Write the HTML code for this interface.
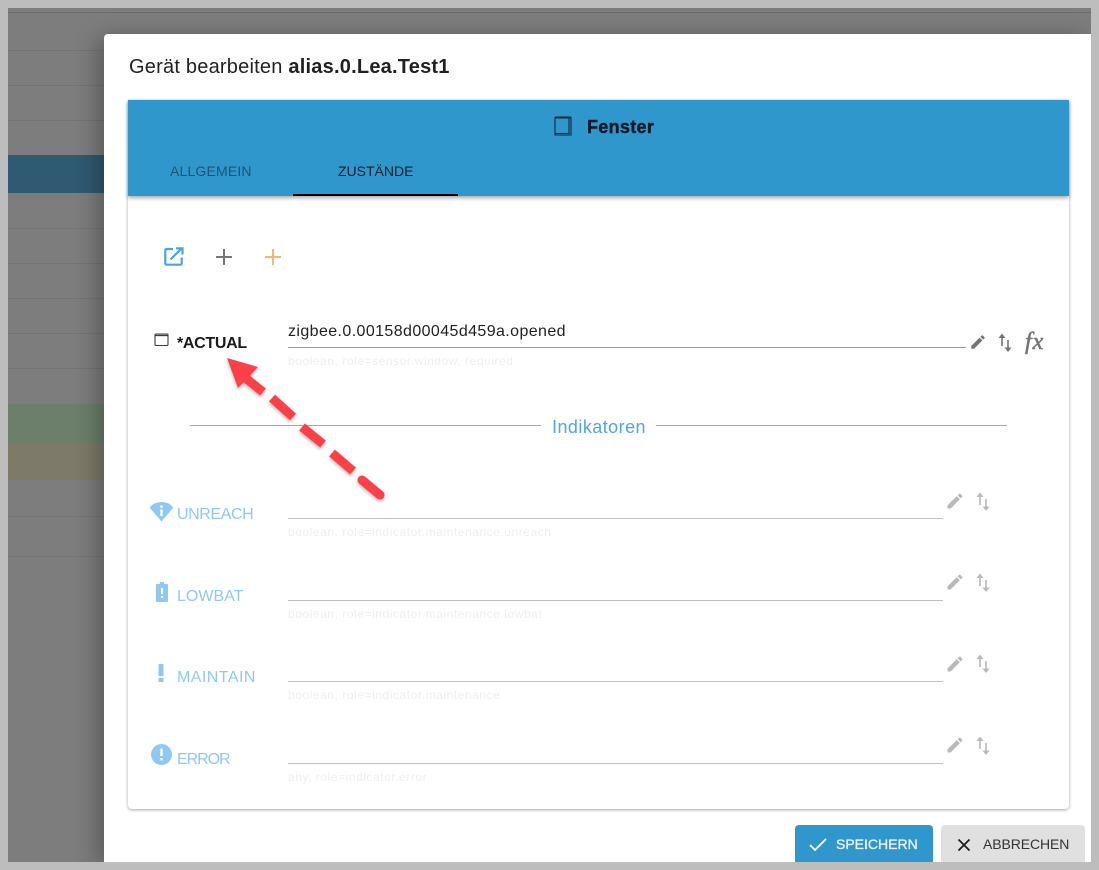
<!DOCTYPE html>
<html><head><meta charset="utf-8"><style>
html,body{margin:0;padding:0}
body{width:1099px;height:870px;overflow:hidden;position:relative;background:#7d7d7d;font-family:"Liberation Sans",sans-serif}
.a{position:absolute;white-space:nowrap}
.l{position:absolute;left:8px;width:96px;height:1px;background:#737373}
.lab{position:absolute;left:177px;font-size:16px;color:#90c8f4;line-height:18px;white-space:nowrap}
.ul{position:absolute;left:288px;width:655px;height:1px;background:#c0c0c0}
.hint{position:absolute;left:288px;font-size:12px;line-height:14px;color:#eeeeee;white-space:nowrap;letter-spacing:.55px}
svg{position:absolute;overflow:visible}
</style></head><body>
<div class="a" style="left:8px;top:155px;width:96px;height:38px;background:#2f5a72"></div>
<div class="a" style="left:8px;top:404px;width:96px;height:39px;background:#6b7f6b"></div>
<div class="a" style="left:8px;top:443px;width:96px;height:37px;background:#7e7a69"></div>
<div class="a" style="left:8px;top:12px;width:1083px;height:1px;background:#6c6c6c"></div>
<div class="l" style="top:50px"></div><div class="l" style="top:85px"></div><div class="l" style="top:120px"></div>
<div class="l" style="top:228px"></div><div class="l" style="top:263px"></div><div class="l" style="top:298px"></div><div class="l" style="top:333px"></div><div class="l" style="top:368px"></div>
<div class="l" style="top:516px"></div><div class="l" style="top:556px"></div>

<div class="a" style="left:104px;top:34px;width:987px;height:828px;background:#fff;border-radius:4px 0 0 0;box-shadow:-6px 4px 24px rgba(0,0,0,.3)"></div>
<div class="a" style="left:129px;top:55px;font-size:20px;line-height:24px;color:#212121;letter-spacing:.22px">Gerät bearbeiten <b>alias.0.Lea.Test1</b></div>

<div class="a" style="left:128px;top:100px;width:941px;height:709px;background:#fff;border-radius:0 0 4px 4px;box-shadow:0 1px 3px rgba(0,0,0,.35)"></div>
<div class="a" style="left:128px;top:100px;width:941px;height:96px;background:#3097cd;box-shadow:0 2px 4px rgba(0,0,0,.35)"></div>
<svg style="left:554px;top:116px" width="20" height="20" viewBox="0 0 20 20" fill="none" stroke="#0d2a40" stroke-width="1.100"><path d="M1 1.500H17V19H1Z"/><path d="M15 1.500V17.500H1"/><path d="M1 1.500H17" stroke-width="2"/></svg>
<div class="a" style="left:587px;top:116px;font-size:18px;line-height:22px;font-weight:bold;color:#0b1a26;letter-spacing:.3px;-webkit-text-stroke:.4px #0b1a26">Fenster</div>
<div class="a" style="left:170px;top:163px;font-size:14px;line-height:17px;letter-spacing:.17px;color:#1c5476">ALLGEMEIN</div>
<div class="a" style="left:338px;top:163px;font-size:14px;line-height:17px;letter-spacing:0;color:#10212c">ZUSTÄNDE</div>
<div class="a" style="left:293px;top:194px;width:165px;height:2px;background:#000"></div>

<svg style="left:162px;top:245px" width="24" height="24" viewBox="0 0 24 24" fill="none" stroke="#4aa3e6" stroke-width="2.200"><path d="M11 4H4.500A1.200 1.200 0 0 0 3.300 5.200V18.500A1.200 1.200 0 0 0 4.500 19.700H18.500A1.200 1.200 0 0 0 19.700 18.500V12.500"/><path d="M8.500 14.500L19.500 3.500M14 3.300H20.500V9.500"/></svg>
<svg style="left:212px;top:245px" width="24" height="24" viewBox="0 0 24 24" fill="none" stroke="#777" stroke-width="2"><path d="M12 4V20M4 12H20"/></svg>
<svg style="left:261px;top:245px" width="24" height="24" viewBox="0 0 24 24" fill="none" stroke="#f2b77c" stroke-width="2"><path d="M12 4V20M4 12H20"/></svg>

<svg style="left:154px;top:333px" width="15" height="14" viewBox="0 0 15 14" fill="none" stroke="#3b3b3b" stroke-width="1.100"><rect x="1" y="1" width="13" height="11.500" rx="1"/><path d="M1 2.500H14" stroke-width="1.300"/></svg>
<div class="a" style="left:177px;top:335px;font-size:16px;line-height:18px;font-weight:bold;color:#1a1a1a;letter-spacing:-.3px">*ACTUAL</div>
<div class="a" style="left:288px;top:322px;font-size:16px;line-height:19px;color:#222;letter-spacing:.4px">zigbee.0.00158d00045d459a.opened</div>
<div class="a" style="left:288px;top:347px;width:678px;height:1px;background:#999"></div>
<div class="hint" style="top:354px">boolean, role=sensor.window, required</div>

<svg style="left:969px;top:333px" width="18" height="18" viewBox="0 0 24 24" fill="#757575"><path d="M3 17.250V21h3.750L17.810 9.940l-3.750-3.750L3 17.250zM20.710 7.040a1 1 0 0 0 0-1.410l-2.340-2.340a1 1 0 0 0-1.410 0l-1.830 1.830 3.750 3.750 1.830-1.830z"/></svg>
<svg style="left:997px;top:333px" width="18" height="20" viewBox="0 0 18 20" fill="#757575"><path d="M4.200 4H5.800V13H4.200ZM1.500 5L5 .5L8.500 5ZM10.200 7H11.800V15H10.200ZM7.500 14.500H14.500L11 19Z"/></svg>
<div class="a" style="left:1025px;top:330px;font-family:'Liberation Serif',serif;font-style:italic;font-size:24px;line-height:24px;color:#757575;letter-spacing:1px;-webkit-text-stroke:.6px #757575">fx</div>

<div class="a" style="left:190px;top:425px;width:351px;height:1px;background:#6cbbe3"></div>
<div class="a" style="left:656px;top:425px;width:351px;height:1px;background:#6cbbe3"></div>
<div class="a" style="left:552px;top:416px;font-size:18px;line-height:22px;color:#4ea6e4;letter-spacing:.45px">Indikatoren</div>

<svg style="left:149px;top:501px" width="25" height="21" viewBox="0 0 25 21"><path d="M12.500 20.500L0.500 6.500Q5 1 12.500 1Q20 1 24.500 6.500Z" fill="#90c8f4"/><path d="M11.300 8.500h2.400v6.500h-2.400zM11.300 4.500h2.400v2.300h-2.400z" fill="#fff"/></svg>
<div class="lab" style="top:506px;letter-spacing:-.4px">UNREACH</div>
<div class="ul" style="top:518px"></div>
<div class="hint" style="top:525px">boolean, role=indicator.maintenance.unreach</div>
<svg style="left:945px;top:491px" width="20" height="20" viewBox="0 0 24 24" fill="#b9b9b9"><path d="M3 17.250V21h3.750L17.810 9.940l-3.750-3.750L3 17.250zM20.710 7.040a1 1 0 0 0 0-1.410l-2.340-2.340a1 1 0 0 0-1.410 0l-1.830 1.830 3.750 3.750 1.830-1.830z"/></svg>
<svg style="left:975px;top:492px" width="18" height="20" viewBox="0 0 18 20" fill="#b9b9b9"><path d="M4.200 4H5.800V13H4.200ZM1.500 5L5 .5L8.500 5ZM10.200 7H11.800V15H10.200ZM7.500 14.500H14.500L11 19Z"/></svg>

<svg style="left:156px;top:581px" width="12" height="22" viewBox="0 0 12 22"><path d="M4 1h4v2h3a1 1 0 0 1 1 1v16a1 1 0 0 1-1 1H1a1 1 0 0 1-1-1V4a1 1 0 0 1 1-1h3z" fill="#90c8f4"/><path d="M5 7h2v6H5zM5 15h2v2H5z" fill="#fff"/></svg>
<div class="lab" style="top:588px">LOWBAT</div>
<div class="ul" style="top:600px"></div>
<div class="hint" style="top:607px">boolean, role=indicator.maintenance.lowbat</div>
<svg style="left:945px;top:572px" width="20" height="20" viewBox="0 0 24 24" fill="#b9b9b9"><path d="M3 17.250V21h3.750L17.810 9.940l-3.750-3.750L3 17.250zM20.710 7.040a1 1 0 0 0 0-1.410l-2.340-2.340a1 1 0 0 0-1.410 0l-1.830 1.830 3.750 3.750 1.830-1.830z"/></svg>
<svg style="left:975px;top:573px" width="18" height="20" viewBox="0 0 18 20" fill="#b9b9b9"><path d="M4.200 4H5.800V13H4.200ZM1.500 5L5 .5L8.500 5ZM10.200 7H11.800V15H10.200ZM7.500 14.500H14.500L11 19Z"/></svg>

<svg style="left:158px;top:664px" width="6" height="18" viewBox="0 0 6 18"><path d="M0.500 0h5v12h-5zM0.500 14h5v4h-5z" fill="#90c8f4"/></svg>
<div class="lab" style="top:669px;letter-spacing:.45px">MAINTAIN</div>
<div class="ul" style="top:681px"></div>
<div class="hint" style="top:688px">boolean, role=indicator.maintenance</div>
<svg style="left:945px;top:654px" width="20" height="20" viewBox="0 0 24 24" fill="#b9b9b9"><path d="M3 17.250V21h3.750L17.810 9.940l-3.750-3.750L3 17.250zM20.710 7.040a1 1 0 0 0 0-1.410l-2.340-2.340a1 1 0 0 0-1.410 0l-1.830 1.830 3.750 3.750 1.830-1.830z"/></svg>
<svg style="left:975px;top:654px" width="18" height="20" viewBox="0 0 18 20" fill="#b9b9b9"><path d="M4.200 4H5.800V13H4.200ZM1.500 5L5 .5L8.500 5ZM10.200 7H11.800V15H10.200ZM7.500 14.500H14.500L11 19Z"/></svg>

<svg style="left:151px;top:744px" width="21" height="21" viewBox="0 0 21 21"><circle cx="10.500" cy="10.500" r="10.500" fill="#90c8f4"/><path d="M9.300 4.500h2.400v7.500H9.300zM9.300 14h2.400v2.400H9.300z" fill="#fff"/></svg>
<div class="lab" style="top:751px;letter-spacing:-1.050px">ERROR</div>
<div class="ul" style="top:763px"></div>
<div class="hint" style="top:770px">any, role=indicator.error</div>
<svg style="left:945px;top:735px" width="20" height="20" viewBox="0 0 24 24" fill="#b9b9b9"><path d="M3 17.250V21h3.750L17.810 9.940l-3.750-3.750L3 17.250zM20.710 7.040a1 1 0 0 0 0-1.410l-2.340-2.340a1 1 0 0 0-1.410 0l-1.830 1.830 3.750 3.750 1.830-1.830z"/></svg>
<svg style="left:975px;top:736px" width="18" height="20" viewBox="0 0 18 20" fill="#b9b9b9"><path d="M4.200 4H5.800V13H4.200ZM1.500 5L5 .5L8.500 5ZM10.200 7H11.800V15H10.200ZM7.500 14.500H14.500L11 19Z"/></svg>

<svg style="left:0;top:0" width="1099" height="870" viewBox="0 0 1099 870">
<defs><filter id="s" x="-20%" y="-20%" width="140%" height="140%"><feDropShadow dx="0" dy="2" stdDeviation="1.500" flood-color="#000" flood-opacity=".3"/></filter></defs>
<g filter="url(#s)">
<path d="M227 358L258 367L238 388Z" fill="#fb3f46"/>
<g stroke="#fb3f46" stroke-width="9" fill="none">
<path d="M243 376L263 392"/>
<path d="M272 398L293 417"/>
<path d="M302 427L323 444"/>
<path d="M332 453L353 471"/>
<path d="M362 480L380 495" stroke-linecap="round"/>
</g></g></svg>

<div class="a" style="left:795px;top:825px;width:138px;height:37px;background:#3097cd;border-radius:4px 4px 0 0"></div>
<svg style="left:809px;top:837px" width="18" height="15" viewBox="0 0 18 15" fill="none" stroke="#fff" stroke-width="1.700"><path d="M1 8L6 13L17 2"/></svg>
<div class="a" style="left:836px;top:836px;font-size:14px;line-height:17px;color:#e8f3fa;-webkit-text-stroke:.35px #e8f3fa">SPEICHERN</div>
<div class="a" style="left:941px;top:825px;width:144px;height:37px;background:#e0e0e0;border-radius:4px 4px 0 0"></div>
<svg style="left:957px;top:838px" width="14" height="14" viewBox="0 0 14 14" fill="none" stroke="#1c1c1c" stroke-width="1.800"><path d="M1.500 1.500L12.500 12.500M12.500 1.500L1.500 12.500"/></svg>
<div class="a" style="left:983px;top:836px;font-size:14px;line-height:17px;letter-spacing:-.1px;color:#333">ABBRECHEN</div>

<div class="a" style="left:0;top:0;width:1099px;height:8px;background:#bdbdbd"></div>
<div class="a" style="left:0;top:862px;width:1099px;height:8px;background:#bdbdbd"></div>
<div class="a" style="left:0;top:0;width:8px;height:870px;background:#bdbdbd"></div>
<div class="a" style="left:1091px;top:0;width:8px;height:870px;background:#bdbdbd"></div>
</body></html>
